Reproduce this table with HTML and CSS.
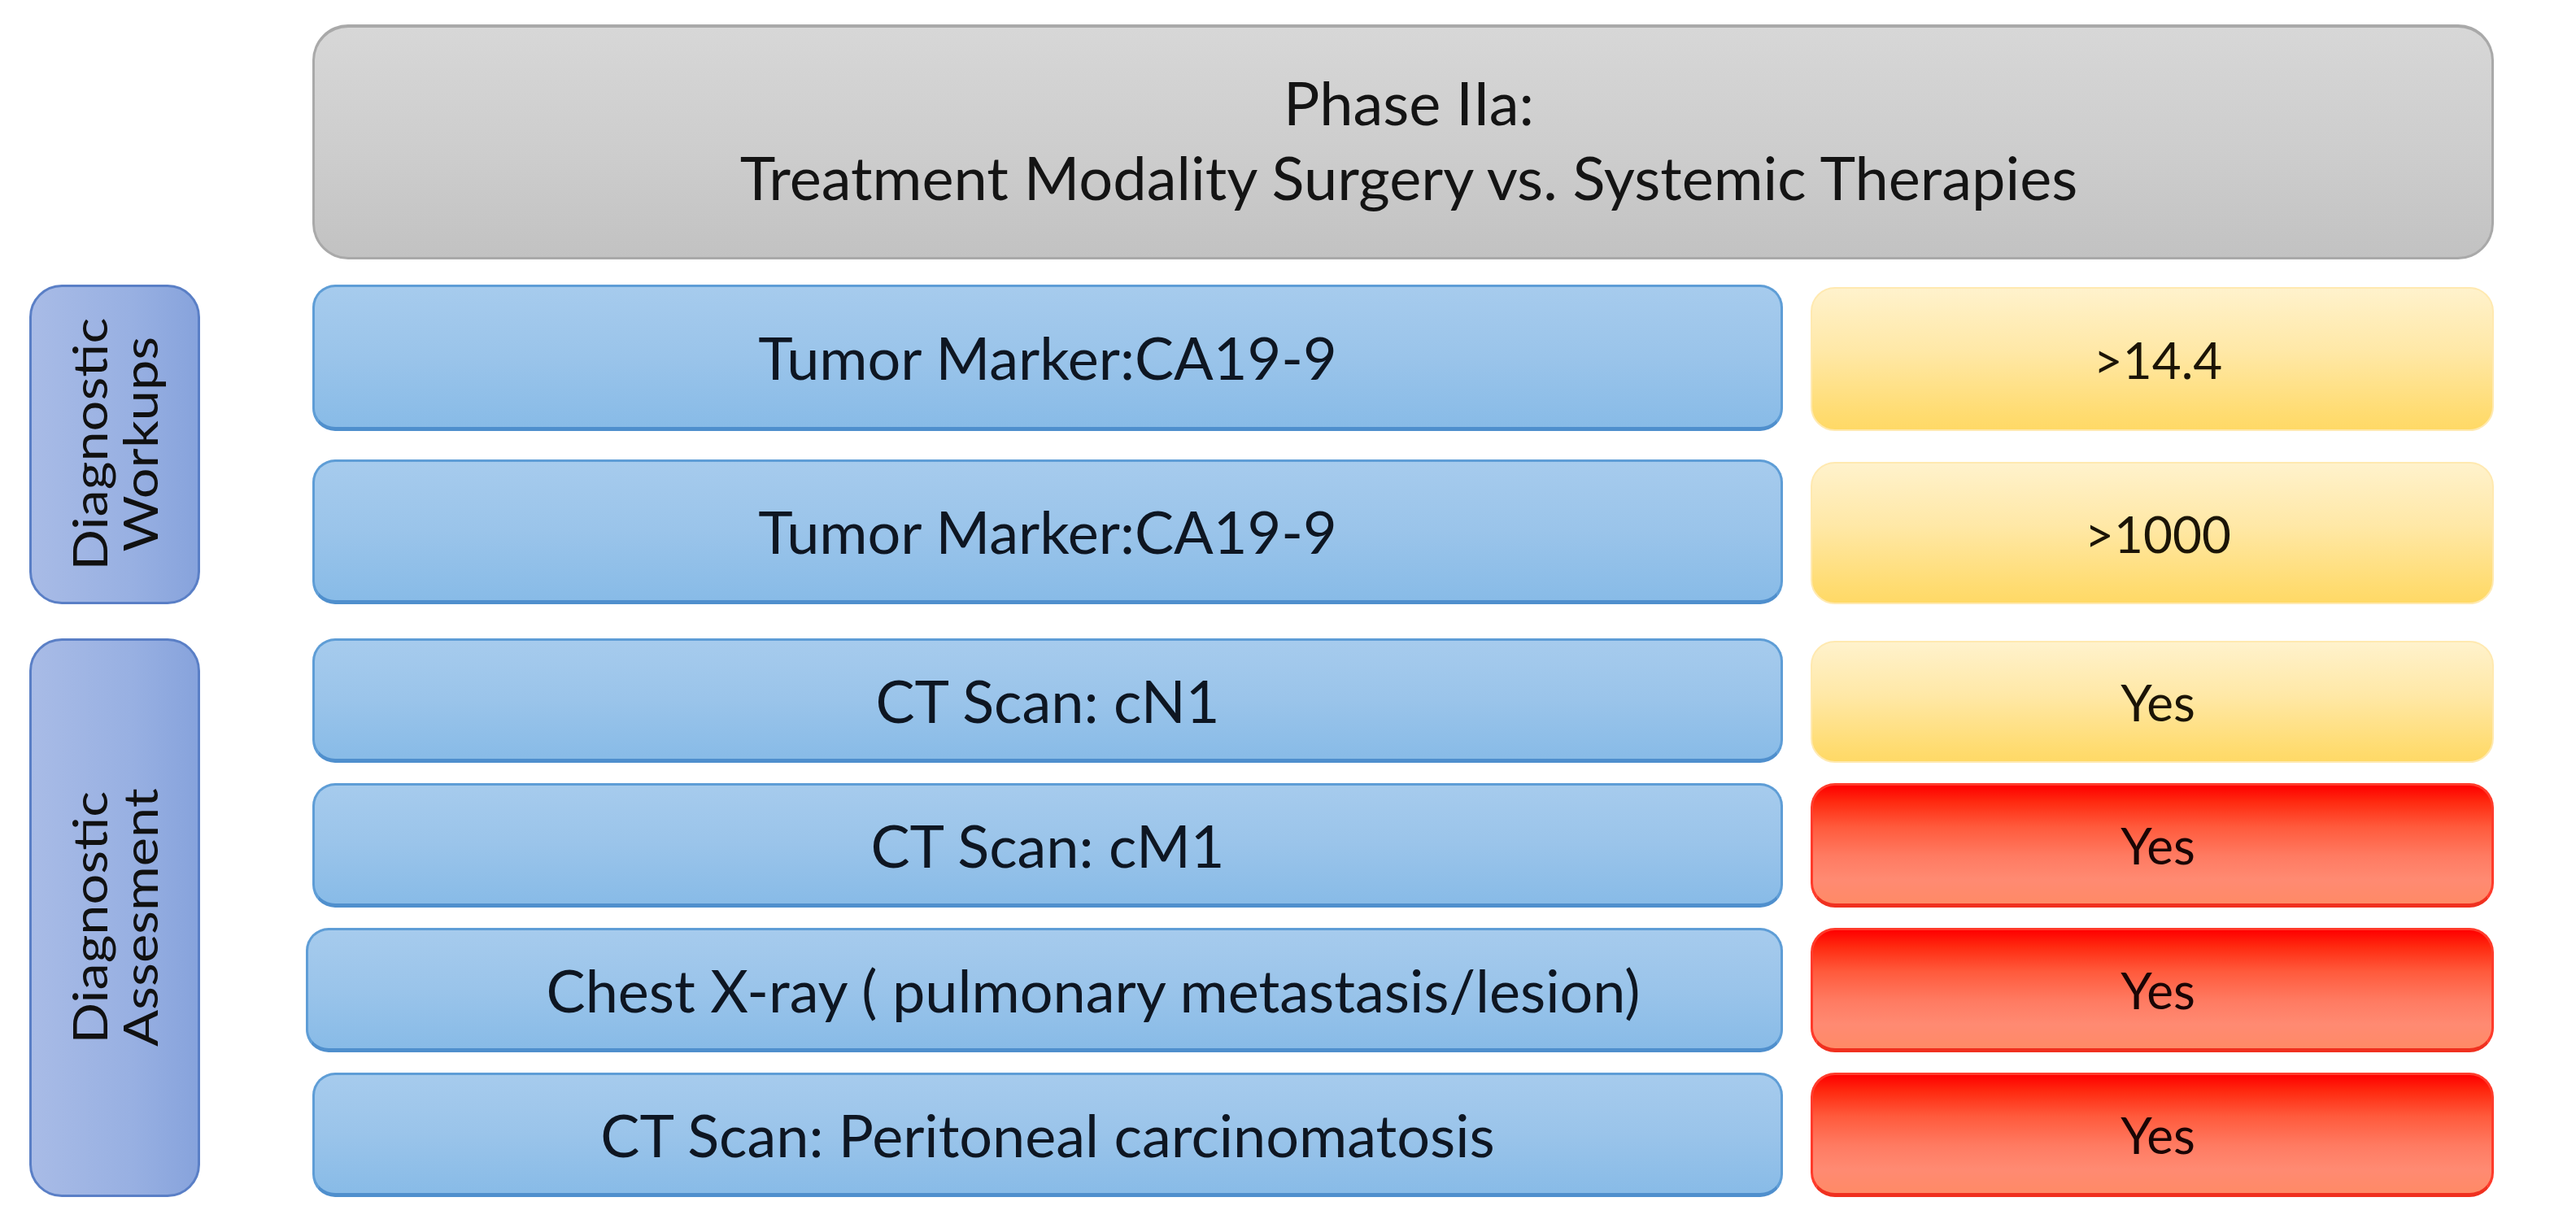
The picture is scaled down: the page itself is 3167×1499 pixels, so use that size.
FILE: index.html
```html
<!DOCTYPE html>
<html lang="en">
<head>
<meta charset="utf-8">
<title>Phase IIa: Treatment Modality Surgery vs. Systemic Therapies</title>
<link rel="stylesheet" href="styles.css">
</head>
<body>
<div class="chart">
  <div class="head-row">
    <div class="phase">
      <div class="phase-text">Phase IIa:<br>Treatment Modality Surgery vs. Systemic Therapies</div>
    </div>
  </div>

  <div class="group group-workups">
    <div class="label-cell"><div class="label"><span class="label-text">Diagnostic<br>Workups</span></div></div>
    <div class="item">Tumor Marker:CA19-9</div>
    <div class="value yellow">&gt;14.4</div>
    <div class="item">Tumor Marker:CA19-9</div>
    <div class="value yellow">&gt;1000</div>
  </div>

  <div class="group group-assess">
    <div class="label-cell"><div class="label"><span class="label-text">Diagnostic<br>Assesment</span></div></div>
    <div class="item">CT Scan: cN1</div>
    <div class="value yellow">Yes</div>
    <div class="item">CT Scan: cM1</div>
    <div class="value red">Yes</div>
    <div class="item item-wide">Chest X-ray ( pulmonary metastasis/lesion)</div>
    <div class="value red">Yes</div>
    <div class="item">CT Scan: Peritoneal carcinomatosis</div>
    <div class="value red">Yes</div>
  </div>
</div>
</body>
</html>
```

FILE: styles.css
```css
html, body {
  margin: 0;
  padding: 0;
  background: #ffffff;
}

body {
  font-family: "Lato", "Open Sans", "Liberation Sans", sans-serif;
  color: #141414;
}

.chart {
  width: 3167px;
  padding-top: 30px;
  display: flex;
  flex-direction: column;
  gap: 31px;
}

.head-row,
.group {
  display: grid;
  grid-template-columns: 314px 1808px 840px;
  column-gap: 34px;
  padding-left: 36px;
}

.phase {
  grid-column: 2 / 4;
  height: 289px;
  box-sizing: border-box;
  border: 3px solid #a9a9a9;
  border-top-width: 4px;
  border-radius: 44px;
  background: linear-gradient(180deg, #d7d7d7 0%, #cdcdcd 55%, #c2c2c2 100%);
  display: flex;
  align-items: center;
  justify-content: center;
}

.phase-text {
  font-size: 74px;
  line-height: 92px;
  text-align: center;
  padding-bottom: 6px;
  padding-left: 14px;
}

.group-workups {
  grid-template-rows: 180px 178px;
  row-gap: 35px;
}

.group-assess {
  margin-top: 11px;
  grid-template-rows: repeat(4, 153px);
  row-gap: 25px;
}

.label-cell {
  grid-column: 1;
  grid-row: 1 / -1;
  display: flex;
}

.label {
  width: 210px;
  box-sizing: border-box;
  border: 3px solid #5a7fc6;
  border-radius: 40px;
  background: linear-gradient(90deg, #a8bbe6 0%, #98b0e2 60%, #87a3dc 100%);
  display: flex;
  align-items: center;
  justify-content: center;
}

.label-text {
  writing-mode: vertical-rl;
  transform: rotate(180deg) scaleY(1.15);
  font-size: 58px;
  line-height: 62px;
  text-align: center;
  color: #111;
}

.item {
  grid-column: 2;
  box-sizing: border-box;
  border: 3px solid #5e9dd6;
  border-bottom-width: 5px;
  border-bottom-color: #4f8fcd;
  border-radius: 28px;
  background: linear-gradient(180deg, #a6cbed 0%, #9ac4ea 50%, #88bbe7 100%);
  display: flex;
  align-items: center;
  justify-content: center;
  font-size: 72px;
  color: #0e1622;
}

.item-wide {
  margin-left: -8px;
  padding-left: 120px;
}

.value {
  grid-column: 3;
  box-sizing: border-box;
  border-radius: 30px;
  display: flex;
  align-items: center;
  justify-content: center;
  font-size: 62px;
  padding-left: 14px;
}

.yellow {
  border: 2px solid #ffe9b0;
  background: linear-gradient(180deg, #fff2cc 0%, #ffe8a6 45%, #ffdc72 88%, #ffd966 100%);
  color: #1b1406;
  margin-top: 3px;
}

.red {
  border: 3px solid #ff3b2b;
  border-bottom-width: 5px;
  border-bottom-color: #f0301f;
  background: linear-gradient(180deg, #ff0000 0%, #ff2a10 14%, #ff5a3c 35%, #ff7b62 60%, #ff8a72 80%, #ff8a66 100%);
  color: #1a0505;
}
```
